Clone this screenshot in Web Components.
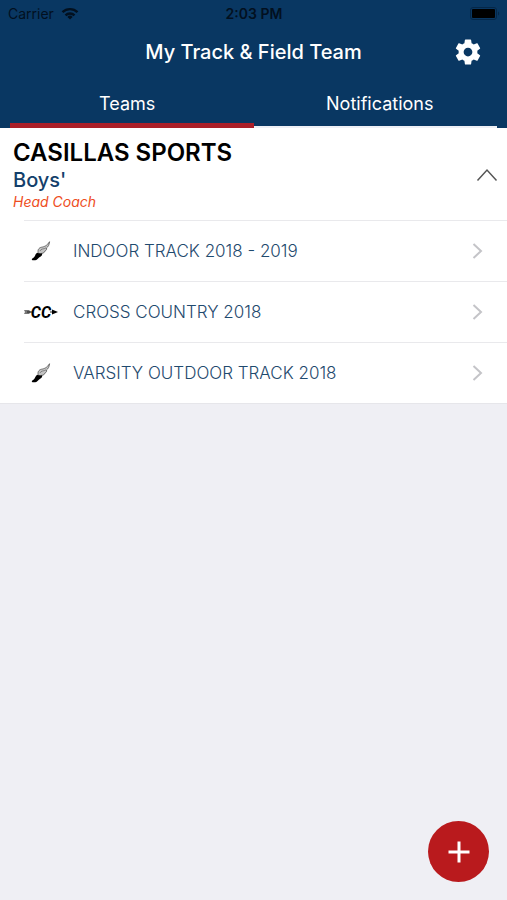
<!DOCTYPE html>
<html lang="en">
<head>
  <meta charset="utf-8">
  <meta name="viewport" content="width=device-width, initial-scale=1">
  <title>My Track &amp; Field Team</title>
  <style>
    body {
      margin: 0;
      min-height: 100vh;
      background: #efeff4;
      font-family: Inter, "Liberation Sans", sans-serif;
    }
  </style>
</head>
<body>
  <app-header>
    <status-bar slot="status"></status-bar>
    My Track &amp; Field Team
    <tab-bar slot="tabs"></tab-bar>
  </app-header>

  <main>
    <team-group>
      <span slot="org">CASILLAS SPORTS</span>
      <span slot="squad">Boys'</span>
      <span slot="role">Head Coach</span>
      <team-row icon="track">INDOOR TRACK 2018 - 2019</team-row>
      <team-row icon="cross-country">CROSS COUNTRY 2018</team-row>
      <team-row icon="track">VARSITY OUTDOOR TRACK 2018</team-row>
    </team-group>
  </main>

  <add-button></add-button>

  <script>
    class StatusBar extends HTMLElement {
      constructor() {
        super();
        this.attachShadow({ mode: 'open' });
      }

      connectedCallback() {
        this.shadowRoot.innerHTML = this.render();
      }

      render() {
        return `
          <style>
            :host {
              display: grid;
              grid-template-columns: 1fr auto 1fr;
              align-items: center;
              height: 27px;
              padding: 0 7px 0 8px;
              color: #02101f;
              font-size: 14px;
            }

            .carrier {
              display: flex;
              align-items: center;
              gap: 7px;
            }

            .time {
              font-weight: 600;
            }

            .battery {
              justify-self: end;
            }

            svg {
              display: block;
            }
          </style>

          <div class="carrier">
            <span>Carrier</span>
            <svg width="18" height="13" viewBox="0 0 18 13" fill="none" stroke="#02101f" stroke-width="2.4">
              <path d="M1.5 5.2a10.6 10.6 0 0 1 15 0"/>
              <path d="M4.5 8.3a6.4 6.4 0 0 1 9 0"/>
              <path d="M9 12.6l-2.6-2.7a3.7 3.7 0 0 1 5.2 0z" fill="#02101f" stroke="none"/>
            </svg>
          </div>
          <time class="time">2:03 PM</time>
          <svg class="battery" width="30" height="13" viewBox="0 0 30 13">
            <rect x=".5" y=".5" width="26" height="12" rx="2.5" fill="none" stroke="#052748"/>
            <rect x="2" y="2" width="23" height="9" rx="1" fill="#000"/>
            <path d="M28 4.5c1.6.6 1.6 3.4 0 4z" fill="#052748"/>
          </svg>
        `;
      }
    }

    class AppHeader extends HTMLElement {
      constructor() {
        super();
        this.attachShadow({ mode: 'open' });
      }

      connectedCallback() {
        this.shadowRoot.innerHTML = this.render();
      }

      render() {
        return `
          <style>
            :host {
              display: block;
              background: #093762;
              color: #fff;
            }

            .title-bar {
              display: grid;
              grid-template-columns: 1fr auto 1fr;
              align-items: center;
              height: 50px;
              padding: 0 24px;
            }

            h1 {
              grid-column: 2;
              margin: 0;
              font-size: 20px;
              font-weight: 500;
            }

            button {
              justify-self: end;
              padding: 0;
              border: 0;
              background: none;
              color: inherit;
            }

            svg {
              display: block;
            }
          </style>

          <header>
            <slot name="status"></slot>
            <div class="title-bar">
              <h1><slot></slot></h1>
              <button type="button" aria-label="Settings">
                <svg width="30" height="30" viewBox="0 0 24 24" fill="currentColor">
                  <path d="M19.43 12.98c.04-.32.07-.64.07-.98s-.03-.66-.07-.98l2.11-1.65c.19-.15.24-.42.12-.64l-2-3.46c-.12-.22-.39-.3-.61-.22l-2.49 1c-.52-.4-1.08-.73-1.69-.98l-.38-2.65C14.46 2.18 14.25 2 14 2h-4c-.25 0-.46.18-.49.42l-.38 2.65c-.61.25-1.17.59-1.69.98l-2.49-1c-.23-.09-.49 0-.61.22l-2 3.46c-.13.22-.07.49.12.64l2.11 1.65c-.04.32-.07.65-.07.98s.03.66.07.98l-2.11 1.65c-.19.15-.24.42-.12.64l2 3.46c.12.22.39.3.61.22l2.49-1c.52.4 1.08.73 1.69.98l.38 2.65c.03.24.24.42.49.42h4c.25 0 .46-.18.49-.42l.38-2.65c.61-.25 1.17-.59 1.69-.98l2.49 1c.23.09.49 0 .61-.22l2-3.46c.12-.22.07-.49-.12-.64l-2.11-1.65zM12 15.5c-1.93 0-3.5-1.57-3.5-3.5s1.57-3.5 3.5-3.5 3.5 1.57 3.5 3.5-1.57 3.5-3.5 3.5z"/>
                </svg>
              </button>
            </div>
            <slot name="tabs"></slot>
          </header>
        `;
      }
    }

    class TabBar extends HTMLElement {
      constructor() {
        super();
        this.attachShadow({ mode: 'open' });
      }

      connectedCallback() {
        this.shadowRoot.innerHTML = this.render();
      }

      render() {
        return `
          <style>
            :host {
              display: block;
              padding: 0 10px;
            }

            nav {
              display: grid;
              grid-template-columns: 1fr 1fr;
            }

            button {
              height: 51px;
              padding: 4px 0 0;
              border: 0;
              border-bottom: 2px solid #eef0f5;
              background: none;
              color: #fff;
              font: 400 18px Inter, "Liberation Sans", sans-serif;
            }

            button[aria-current] {
              padding: 7px 9px 0 0;
              border-bottom: 5px solid #ab1f28;
            }

            button:last-child {
              padding-left: 9px;
            }
          </style>

          <nav>
            <button type="button" aria-current="page">Teams</button>
            <button type="button">Notifications</button>
          </nav>
        `;
      }
    }

    class TeamGroup extends HTMLElement {
      constructor() {
        super();
        this.attachShadow({ mode: 'open' });
      }

      connectedCallback() {
        this.shadowRoot.innerHTML = this.render();
        const toggle = this.shadowRoot.querySelector('button');
        const rows = this.shadowRoot.querySelector('.rows');

        toggle.addEventListener('click', () => {
          rows.hidden = !rows.hidden;
          toggle.setAttribute('aria-expanded', !rows.hidden);
        });
      }

      render() {
        return `
          <style>
            :host {
              display: block;
              background: #fff;
              border-bottom: 1px solid #e6e6ea;
            }

            .head {
              display: flex;
              align-items: center;
              justify-content: space-between;
              padding: 10px 9px 8px 13px;
            }

            h2, h3, p {
              margin: 0;
            }

            h2 {
              color: #000;
              font-size: 24px;
              line-height: 30px;
              font-weight: 600;
            }

            h3 {
              color: #143f6b;
              font-size: 20px;
              line-height: 24px;
              font-weight: 500;
            }

            p {
              color: #ee4d22;
              font-size: 14px;
              line-height: 20px;
              font-style: italic;
            }

            button {
              padding: 0;
              border: 0;
              background: none;
            }

            button[aria-expanded="false"] svg {
              transform: rotate(180deg);
            }

            svg {
              display: block;
            }
          </style>

          <section>
            <div class="head">
              <div>
                <h2><slot name="org"></slot></h2>
                <h3><slot name="squad"></slot></h3>
                <p><slot name="role"></slot></p>
              </div>
              <button type="button" aria-label="Toggle teams" aria-expanded="true">
                <svg width="22" height="14" viewBox="0 0 22 14" fill="none" stroke="#555" stroke-width="1.5">
                  <path d="M1.5 12.5L11 2l9.5 10.5"/>
                </svg>
              </button>
            </div>
            <div class="rows"><slot></slot></div>
          </section>
        `;
      }
    }

    // winged foot for track seasons, arrow through CC for cross country
    const icons = {
      'track': `
        <svg width="20" height="20" viewBox="0 0 20 20">
          <path d="M7.5 12.5c-1.4-2.9.1-5.8 3-6.3 2.900-.5 5.700-1.600 8-5.500-.2 3.200-1.300 5-3 6.300.5 1.300-.3 2.600-1.600 3-.3 1.500-1.600 2.300-2.900 2.300-1.200.4-2.500.5-3.500.2z" fill="#c4c4c4" stroke="#444" stroke-width=".7"/>
          <path d="M9 10c.8-2.300 3.600-1.800 6.100-3.100" fill="none" stroke="#666" stroke-width=".7"/>
          <path d="M.8 19c0-1.300.8-2 2-2.600 1.300-1 1.400-3.300 3.300-4.600 1.600.9 3.300 1 5 .5.5 1.800-.7 3-2.300 3.800-1.500.8-2 2.200-3.500 2.800-1.300.4-3 .4-4.500.1z" fill="#000"/>
        </svg>
      `,
      'cross-country': `
        <svg width="34" height="24" viewBox="0 0 34 24">
          <path d="M0 10h5l2 2-2 2H0l1-2z" fill="#777"/>
          <path d="M3 12h5M26 12h4" stroke="#222" stroke-width="1.2"/>
          <path d="M28 9.5L34 12l-6 2.500z" fill="#000"/>
          <text x="17" y="18" text-anchor="middle" font-family="Roboto, sans-serif" font-size="16" font-weight="700" font-style="italic">CC</text>
        </svg>
      `
    };

    class TeamRow extends HTMLElement {
      constructor() {
        super();
        this.attachShadow({ mode: 'open' });
      }

      connectedCallback() {
        this.shadowRoot.innerHTML = this.render();
      }

      render() {
        return `
          <style>
            :host {
              display: block;
              padding-left: 24px;
            }

            a {
              display: flex;
              align-items: center;
              height: 60px;
              padding-right: 24px;
              border-top: 1px solid #e9e9ec;
              color: #1f4a6e;
              font-size: 17px;
              font-weight: 300;
              text-decoration: none;
            }

            .icon {
              display: flex;
              justify-content: center;
              width: 34px;
              margin-right: 15px;
            }

            .label {
              flex: 1;
            }

            svg {
              display: block;
            }
          </style>

          <a href="#">
            <span class="icon">${icons[this.getAttribute('icon')]}</span>
            <span class="label"><slot></slot></span>
            <svg width="11" height="18" viewBox="0 0 11 18" fill="none" stroke="#c4c4c8" stroke-width="2">
              <path d="M1.5 2L9 9l-7.5 7"/>
            </svg>
          </a>
        `;
      }
    }

    class AddButton extends HTMLElement {
      constructor() {
        super();
        this.attachShadow({ mode: 'open' });
      }

      connectedCallback() {
        this.shadowRoot.innerHTML = this.render();
      }

      render() {
        return `
          <style>
            :host {
              display: block;
              position: fixed;
              right: 18px;
              bottom: 18px;
            }

            button {
              display: grid;
              place-items: center;
              width: 61px;
              height: 61px;
              padding: 0;
              border: 0;
              border-radius: 50%;
              background: #b91a1d;
            }
          </style>

          <button type="button" aria-label="Add team">
            <svg width="22" height="22" viewBox="0 0 22 22" fill="none" stroke="#fff" stroke-width="3">
              <path d="M11 .5v21M.5 11h21"/>
            </svg>
          </button>
        `;
      }
    }

    customElements.define('status-bar', StatusBar);
    customElements.define('app-header', AppHeader);
    customElements.define('tab-bar', TabBar);
    customElements.define('team-group', TeamGroup);
    customElements.define('team-row', TeamRow);
    customElements.define('add-button', AddButton);
  </script>
</body>
</html>
